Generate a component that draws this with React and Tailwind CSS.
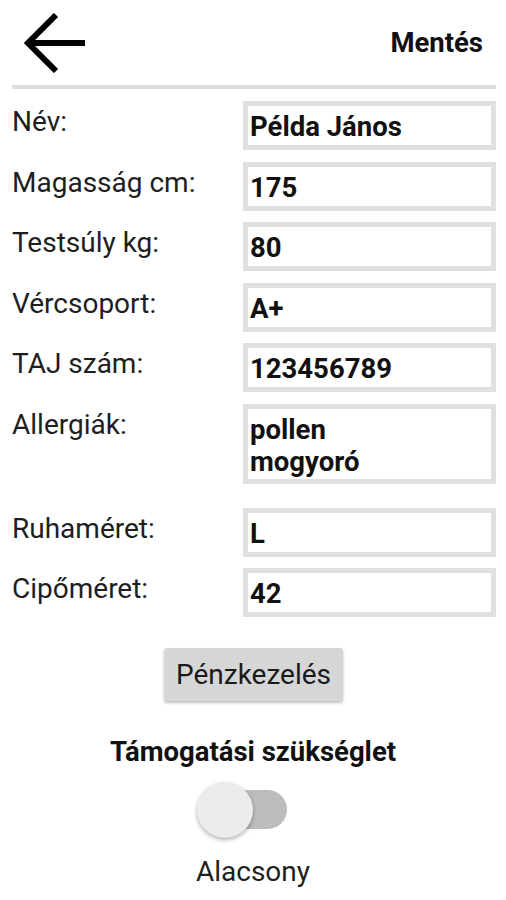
import React from 'react';

const fields = [
  { label: 'Név:', value: 'Példa János' },
  { label: 'Magasság cm:', value: '175' },
  { label: 'Testsúly kg:', value: '80' },
  { label: 'Vércsoport:', value: 'A+' },
  { label: 'TAJ szám:', value: '123456789' },
  { label: 'Allergiák:', value: ['pollen', 'mogyoró'], tall: true },
  { label: 'Ruhaméret:', value: 'L' },
  { label: 'Cipőméret:', value: '42' },
];

const Row = ({ label, value, tall }) => (
  <div className={tall ? 'flex items-start mb-[12px]' : 'flex items-start'}>
    <div className="w-[243px] pl-[12px] pt-[7px] text-[28px] leading-none text-[#1e1e1e]">{label}</div>
    {tall ? (
      <div className="w-[253px] h-[80px] border-[5px] border-[#e0e0e0] pl-[2px] pt-[5px] text-[27.5px] leading-[32px] font-bold text-[#111]">
        {value.map((v) => (
          <div key={v}>{v}</div>
        ))}
      </div>
    ) : (
      <div className="w-[253px] h-[49px] border-[5px] border-[#e0e0e0] pl-[2px] pt-[7px] text-[27.5px] leading-none font-bold text-[#111]">
        {value}
      </div>
    )}
  </div>
);

export default function App() {
  return (
    <div className="w-[506px] h-[900px] bg-white font-[Roboto,sans-serif] overflow-hidden">
      {/* header */}
      <div className="flex items-center justify-between h-[85px] pl-[23px] pr-[23px]">
        <svg width="62" height="60" viewBox="0 0 62 60" fill="none" stroke="#000" strokeWidth="6">
          <path d="M33 2 L5 30 L33 58" strokeLinejoin="miter" />
          <path d="M5 30 H62" />
        </svg>
        <span className="text-[27.5px] leading-none font-bold text-[#111]">Mentés</span>
      </div>
      <div className="ml-[12px] mr-[10px] h-[4px] bg-[#dddddd]" />

      {/* form */}
      <div className="mt-[12px] flex flex-col gap-[11.6px]">
        {fields.map((f) => (
          <Row key={f.label} {...f} />
        ))}
      </div>

      <div className="flex justify-center mt-[31px]">
        <button className="w-[179px] h-[53px] ml-[1px] bg-[#d6d6d6] rounded-[3px] shadow-[0_2px_3px_rgba(0,0,0,0.25)] text-[28px] leading-none text-[#1a1a1a]">
          Pénzkezelés
        </button>
      </div>

      {/* support */}
      <div className="mt-[37px] text-center text-[27.5px] leading-none font-bold text-[#111]">
        Támogatási szükséglet
      </div>
      <div className="flex justify-center mt-[16px]">
        <div className="relative w-[90px] h-[56px] mr-[22px]">
          <div className="absolute left-[12px] top-[8px] w-[78px] h-[39px] rounded-full bg-[#bcbcbc]" />
          <div className="absolute left-0 top-0 w-[56px] h-[56px] rounded-full bg-[#ececec] shadow-[0_2px_4px_rgba(0,0,0,0.3)]" />
        </div>
      </div>
      <div className="mt-[20px] text-center text-[28px] leading-none text-[#1e1e1e]">Alacsony</div>
    </div>
  );
}
